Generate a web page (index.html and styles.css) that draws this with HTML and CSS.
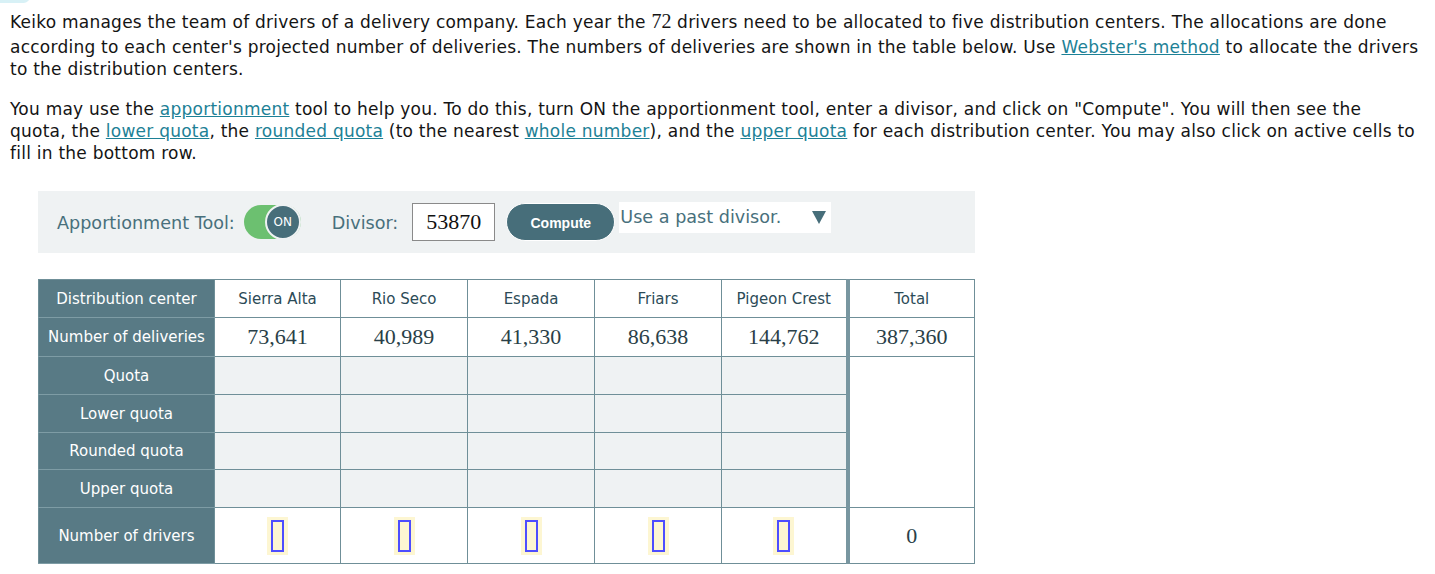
FILE: index.html
```html
<!DOCTYPE html>
<html>
<head>
<meta charset="utf-8">
<link rel="stylesheet" href="styles.css">
</head>
<body>
<div class="corner-deco"></div>
<div class="content">
  <p class="para">Keiko manages the team of drivers of a delivery company. Each year the <span class="num">72</span> drivers need to be allocated to five distribution centers. The allocations are done according to each center's projected number of deliveries. The numbers of deliveries are shown in the table below. Use <a href="#">Webster's method</a> to allocate the drivers to the distribution centers.</p>
  <p class="para para-narrow">You may use the <a href="#">apportionment</a> tool to help you. To do this, turn ON the apportionment tool, enter a divisor, and click on "Compute". You will then see the quota, the <a href="#">lower quota</a>, the <a href="#">rounded quota</a> (to the nearest <a href="#">whole number</a>), and the <a href="#">upper quota</a> for each distribution center. You may also click on active cells to fill in the bottom row.</p>

  <div class="toolbar">
    <span class="tool-label">Apportionment Tool:</span>
    <span class="toggle"><span class="knob">ON</span></span>
    <span class="tool-label divisor-label">Divisor:</span>
    <span class="divisor-input">53870</span>
    <span class="compute-btn">Compute</span>
    <span class="past-select"><span class="past-text">Use a past divisor.</span><svg class="arrow" width="14" height="13" viewBox="0 0 14 13"><path d="M0 0 L14 0 L7 13 Z" fill="#476e7a"/></svg></span>
  </div>

  <table class="grid">
    <colgroup>
      <col class="c-head">
      <col class="c-d1">
      <col class="c-d2">
      <col class="c-d2">
      <col class="c-d2">
      <col class="c-last">
      <col class="c-total">
    </colgroup>
    <tr class="r-names">
      <th>Distribution center</th>
      <td class="name">Sierra Alta</td>
      <td class="name">Rio Seco</td>
      <td class="name">Espada</td>
      <td class="name">Friars</td>
      <td class="name sep">Pigeon Crest</td>
      <td class="name">Total</td>
    </tr>
    <tr class="r-deliv">
      <th>Number of deliveries</th>
      <td class="val">73,641</td>
      <td class="val">40,989</td>
      <td class="val">41,330</td>
      <td class="val">86,638</td>
      <td class="val sep">144,762</td>
      <td class="val">387,360</td>
    </tr>
    <tr class="r-q">
      <th>Quota</th>
      <td class="shade"></td><td class="shade"></td><td class="shade"></td><td class="shade"></td><td class="shade sep"></td>
      <td class="blank" rowspan="4"></td>
    </tr>
    <tr class="r-q">
      <th>Lower quota</th>
      <td class="shade"></td><td class="shade"></td><td class="shade"></td><td class="shade"></td><td class="shade sep"></td>
    </tr>
    <tr class="r-q r-short">
      <th>Rounded quota</th>
      <td class="shade"></td><td class="shade"></td><td class="shade"></td><td class="shade"></td><td class="shade sep"></td>
    </tr>
    <tr class="r-q">
      <th>Upper quota</th>
      <td class="shade"></td><td class="shade"></td><td class="shade"></td><td class="shade"></td><td class="shade sep"></td>
    </tr>
    <tr class="r-drivers">
      <th>Number of drivers</th>
      <td><span class="cell-input"><span class="box"></span></span></td>
      <td><span class="cell-input"><span class="box"></span></span></td>
      <td><span class="cell-input"><span class="box"></span></span></td>
      <td><span class="cell-input"><span class="box"></span></span></td>
      <td class="sep"><span class="cell-input"><span class="box"></span></span></td>
      <td class="val">0</td>
    </tr>
  </table>
</div>
</body>
</html>
```

FILE: styles.css
```css
html, body {
  margin: 0;
  padding: 0;
  background: #ffffff;
}

body {
  font-family: "DejaVu Sans", Verdana, sans-serif;
  color: #141414;
  position: relative;
}

.corner-deco {
  position: absolute;
  left: -12px;
  top: -10px;
  width: 42px;
  height: 13px;
  border-radius: 7px;
  background: #d8f1f6;
}

.content {
  padding: 6px 7px 0 10px;
}

.para {
  margin: 0 0 18px 0;
  font-size: 17px;
  letter-spacing: 0.24px;
  line-height: 22px;
}

.para-narrow {
  margin-right: 10px;
}

.num {
  font-family: "Liberation Serif", "Times New Roman", serif;
  font-size: 20px;
  line-height: 30px;
  letter-spacing: 0;
}

.para a {
  color: #1d8196;
  text-decoration: underline;
}

.toolbar {
  margin: 27px 0 0 28px;
  width: 937px;
  height: 62px;
  box-sizing: border-box;
  background: #eff2f3;
  display: flex;
  align-items: center;
  padding-left: 19px;
}

.tool-label {
  font-size: 17.6px;
  color: #48707c;
  margin-top: 1px;
}

.toggle {
  margin-left: 9px;
  width: 57px;
  height: 34px;
  border-radius: 17px;
  background: #6cc070;
  display: flex;
  justify-content: flex-end;
  align-items: center;
  box-sizing: border-box;
}

.knob {
  width: 36px;
  height: 36px;
  border-radius: 50%;
  background: #476e7a;
  border: 2px solid #eff2f3;
  box-sizing: border-box;
  color: #ffffff;
  font-size: 12px;
  display: flex;
  align-items: center;
  justify-content: center;
}

.divisor-label {
  margin-left: 31px;
}

.divisor-input {
  margin-left: 14px;
  width: 83px;
  height: 38px;
  box-sizing: border-box;
  border: 1px solid #8a8a8a;
  background: #ffffff;
  font-family: "Liberation Serif", "Times New Roman", serif;
  font-size: 22px;
  color: #111111;
  display: flex;
  align-items: center;
  justify-content: center;
}

.compute-btn {
  margin-left: 11px;
  width: 109px;
  height: 38px;
  box-sizing: border-box;
  border-radius: 19px;
  background: #476e7a;
  border: 1px solid #ffffff;
  color: #ffffff;
  font-family: "Liberation Sans", Arial, sans-serif;
  font-weight: bold;
  font-size: 14px;
  display: flex;
  align-items: center;
  justify-content: center;
  padding-top: 1px;
}

.past-select {
  margin-left: 4px;
  align-self: flex-start;
  margin-top: 11px;
  width: 212px;
  height: 31px;
  box-sizing: border-box;
  background: #ffffff;
  display: flex;
  justify-content: space-between;
  align-items: flex-start;
  padding: 5px 5px 0 1px;
}

.past-text {
  font-size: 17.6px;
  color: #48707c;
}

.past-select .arrow {
  margin-top: 4px;
  display: block;
}

.grid {
  margin: 26px 0 0 28px;
  border-collapse: collapse;
  table-layout: fixed;
  width: 937px;
  border: 1px solid #6f8f98;
}

.c-head { width: 176px; }
.c-d1 { width: 126px; }
.c-d2 { width: 127px; }
.c-last { width: 126px; }
.c-total { width: 127px; }

.grid th,
.grid td {
  border: 1px solid #6f8f98;
  padding: 0;
  text-align: center;
  vertical-align: middle;
}

.grid th {
  background: #587a85;
  color: #ffffff;
  font-weight: normal;
  font-size: 15px;
  border-color: #6f8f98 #6f8f98 #7e9ca5 #6f8f98;
}

.grid td.sep {
  border-right: 4px solid #7896a0;
}

.grid td.name {
  font-size: 15px;
  color: #2c4b57;
}

.grid td.val {
  font-family: "Liberation Serif", "Times New Roman", serif;
  font-size: 22px;
  color: #2a3f48;
}

.r-names { height: 38px; }
.r-deliv { height: 39px; }
.r-q { height: 38px; }
.r-short { height: 37px; }
.r-drivers { height: 56px; }

.grid td.shade {
  background: #eff2f3;
}

.grid td.blank {
  background: #ffffff;
}

.cell-input {
  display: inline-block;
  vertical-align: middle;
  background: #fdf6d2;
  padding: 3px 4px;
  line-height: 0;
}

.cell-input .box {
  display: inline-block;
  width: 13px;
  height: 32px;
  box-sizing: border-box;
  border: 2px solid #4d4dff;
  background: #fdf6d2;
}
```
